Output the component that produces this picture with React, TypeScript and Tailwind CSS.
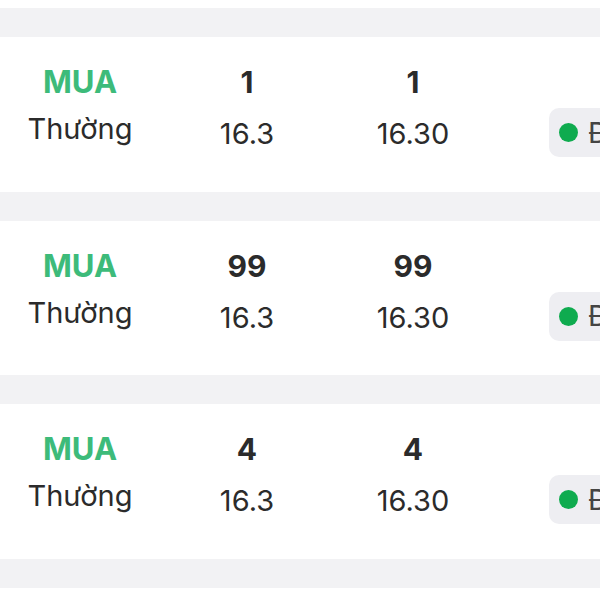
import React from "react";

type Order = {
  side: string;
  kind: string;
  qty: string;
  price: string;
  matchQty: string;
  matchPrice: string;
};

const orders: Order[] = [
  { side: "MUA", kind: "Thường", qty: "1", price: "16.3", matchQty: "1", matchPrice: "16.30" },
  { side: "MUA", kind: "Thường", qty: "99", price: "16.3", matchQty: "99", matchPrice: "16.30" },
  { side: "MUA", kind: "Thường", qty: "4", price: "16.3", matchQty: "4", matchPrice: "16.30" },
];

function OrderRow({ order }: { order: Order }) {
  return (
    <div className="h-[154.5px] shrink-0 bg-white flex items-start pt-[19px] overflow-hidden">
      <div className="w-[160px] shrink-0 flex flex-col items-center">
        <div className="h-[52px] leading-[52px] text-[31px] font-bold text-[#3dbb7a]">{order.side}</div>
        <div className="h-[52px] leading-[52px] text-[29px] text-[#2b2b2b] -mt-[5px]">{order.kind}</div>
      </div>
      <div className="w-[174px] shrink-0 flex flex-col items-center">
        <div className="h-[52px] leading-[52px] text-[30px] font-bold text-[#2b2b2b]">{order.qty}</div>
        <div className="h-[52px] leading-[52px] text-[29px] text-[#2b2b2b]">{order.price}</div>
      </div>
      <div className="w-[158px] shrink-0 flex flex-col items-center">
        <div className="h-[52px] leading-[52px] text-[30px] font-bold text-[#2b2b2b]">{order.matchQty}</div>
        <div className="h-[52px] leading-[52px] text-[29px] text-[#2b2b2b]">{order.matchPrice}</div>
      </div>
      <div className="shrink-0 pl-[57px] pt-[52px]">
        <div className="h-[49px] rounded-[10px] bg-[#eeeef2] flex items-center pl-[10px] pr-3 gap-[10px] whitespace-nowrap">
          <span className="w-[19px] h-[19px] rounded-full bg-[#0fab4f]" />
          <span className="text-[29px] text-[#444]">Đã khớp</span>
        </div>
      </div>
    </div>
  );
}

export default function App() {
  return (
    <div className="w-[600px] h-[600px] overflow-hidden bg-[#f2f2f4] font-['Inter',sans-serif] flex flex-col gap-[29px]">
      <div className="h-[8px] bg-white shrink-0" />
      {orders.map((o, i) => (
        <OrderRow key={i} order={o} />
      ))}
      <div className="h-[20px] bg-white shrink-0" />
    </div>
  );
}
